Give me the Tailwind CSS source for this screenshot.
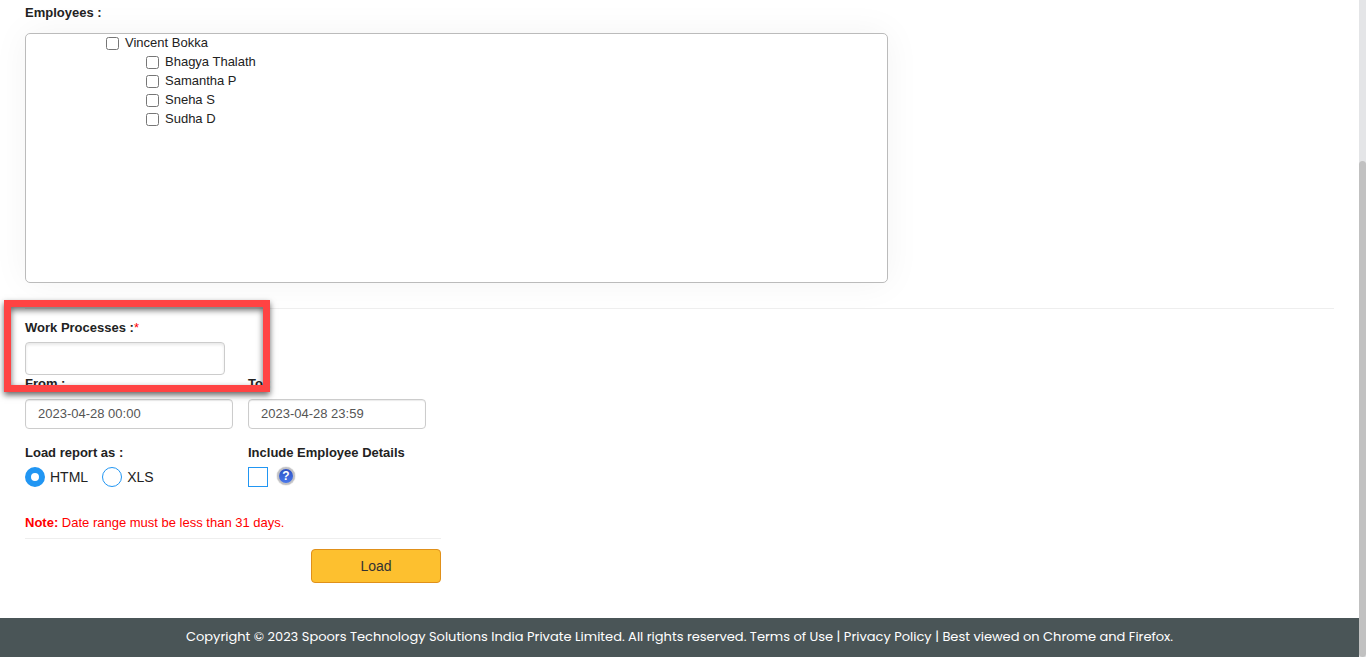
<!DOCTYPE html>
<html lang="en">
<head>
    <meta charset="UTF-8" />
    <meta name="viewport" content="width=device-width, initial-scale=1.0" />
    <title>Work Process Report</title>
    <script src="https://cdn.jsdelivr.net/npm/@tailwindcss/browser@4"></script>
</head>
<body class="flex bg-white font-['Liberation_Sans',Arial,sans-serif] text-[13px] leading-5 text-[#222]">
    <div class="flex min-h-screen min-w-0 flex-1 flex-col">
        <main class="relative px-[25px] pt-[3px] pb-[35px]">
            <form>
                <!-- Employee tree -->
                <h2 id="employees" class="font-bold">Employees :</h2>
                <div class="mt-2.5 h-[250px] w-full max-w-[863px] overflow-auto rounded-[5px] border border-[#bbb] bg-white shadow-[0_0_36px_rgba(0,0,0,0.05)]" role="group" aria-labelledby="employees">
                    <ul class="pl-20 leading-[17px]">
                        <li>
                            <label class="flex h-[19px] items-start gap-1.5"><input type="checkbox" class="mt-[3px] size-[13px]" />Vincent Bokka</label>
                            <ul class="pl-10">
                                <li><label class="flex h-[19px] items-start gap-1.5"><input type="checkbox" class="mt-[3px] size-[13px]" />Bhagya Thalath</label></li>
                                <li><label class="flex h-[19px] items-start gap-1.5"><input type="checkbox" class="mt-[3px] size-[13px]" />Samantha P</label></li>
                                <li><label class="flex h-[19px] items-start gap-1.5"><input type="checkbox" class="mt-[3px] size-[13px]" />Sneha S</label></li>
                                <li><label class="flex h-[19px] items-start gap-1.5"><input type="checkbox" class="mt-[3px] size-[13px]" />Sudha D</label></li>
                            </ul>
                        </li>
                    </ul>
                </div>

                <hr class="mt-[25px] border-[#eee]" />

                <label for="processes" class="mt-[9px] block font-bold">Work Processes :<span class="font-normal text-[#f00]">*</span></label>
                <input id="processes" type="text" class="mt-1 block h-[33px] w-[200px] rounded-[4px] border border-[#ccc] bg-white px-3 shadow-[inset_0_2px_3px_rgba(0,0,0,0.09)]" />

                <!-- Date range -->
                <div class="flex gap-[15px]">
                    <div class="w-[208px]">
                        <label for="from" class="block leading-[18px] font-bold">From :</label>
                        <input id="from" type="text" value="2023-04-28 00:00" class="mt-1.5 block h-[30px] w-full rounded-[4px] border border-[#ccc] bg-white px-3 pb-0.5 text-[#555] shadow-[inset_0_1px_1px_rgba(0,0,0,0.08)]" />
                    </div>
                    <div class="w-[178px]">
                        <label for="to" class="block leading-[18px] font-bold">To :</label>
                        <input id="to" type="text" value="2023-04-28 23:59" class="mt-1.5 block h-[30px] w-full rounded-[4px] border border-[#ccc] bg-white px-3 pb-0.5 text-[#555] shadow-[inset_0_1px_1px_rgba(0,0,0,0.08)]" />
                    </div>
                </div>

                <div class="mt-3.5 flex gap-[15px]">
                    <fieldset class="w-[208px]">
                        <legend class="font-bold">Load report as :</legend>
                        <div class="mt-1 flex gap-3.5 text-sm leading-5">
                            <label class="flex items-center gap-[5px]"><input type="radio" name="format" checked class="size-5 appearance-none rounded-full border border-[#2196f3] bg-white checked:border-[6px]" />HTML</label>
                            <label class="flex items-center gap-[5px]"><input type="radio" name="format" class="size-5 appearance-none rounded-full border border-[#2196f3] bg-white checked:border-[6px]" />XLS</label>
                        </div>
                    </fieldset>
                    <div>
                        <label for="details" class="block font-bold">Include Employee Details</label>
                        <div class="mt-1 flex items-start gap-[9px]">
                            <input id="details" type="checkbox" class="size-5 appearance-none border border-[#2196f3] bg-white checked:bg-[#2196f3]" />
                            <span class="flex size-[18px] items-center justify-center rounded-full border-2 border-[#c0c0c4] bg-linear-to-b from-[#2c50c4] to-[#4a78ea] text-[12px] leading-none font-bold text-white shadow-[0_0_1px_#777]" title="Help">?</span>
                        </div>
                    </div>
                </div>

                <p class="mt-[26px] text-[#f00]"><b>Note:</b> Date range must be less than 31 days.</p>
                <div class="mt-[5px] flex max-w-[416px] justify-end border-t border-[#eee] pt-2.5">
                    <button type="button" class="h-[34px] w-[130px] rounded-[4px] border border-[#e0901a] bg-[#fdc02f] text-sm text-[#333]">Load</button>
                </div>
            </form>

            <!-- Callout around the work process field -->
            <div class="pointer-events-none absolute top-[300px] left-1 h-[92px] w-[266px] border-[7px] border-[#ff4343] shadow-[0_3px_6px_rgba(0,0,0,0.6),inset_0_3px_6px_rgba(0,0,0,0.6)]"></div>
        </main>

        <footer class="mt-auto bg-[#4a5557] px-4 pt-[9px] pb-2.5 text-center font-[Poppins,Inter,sans-serif] text-[13px] leading-5 text-white">
            Copyright © 2023 Spoors Technology Solutions India Private Limited. All rights reserved. <a href="#">Terms of Use</a> | <a href="#">Privacy Policy</a> | Best viewed on Chrome and Firefox.
        </footer>
    </div>

    <!-- Scroll track -->
    <div class="sticky top-0 flex h-screen w-[7px] flex-col justify-end bg-[#e4e5e7]">
        <div class="h-[75.5%] rounded-full bg-[#c1c1c1]"></div>
    </div>
</body>
</html>
